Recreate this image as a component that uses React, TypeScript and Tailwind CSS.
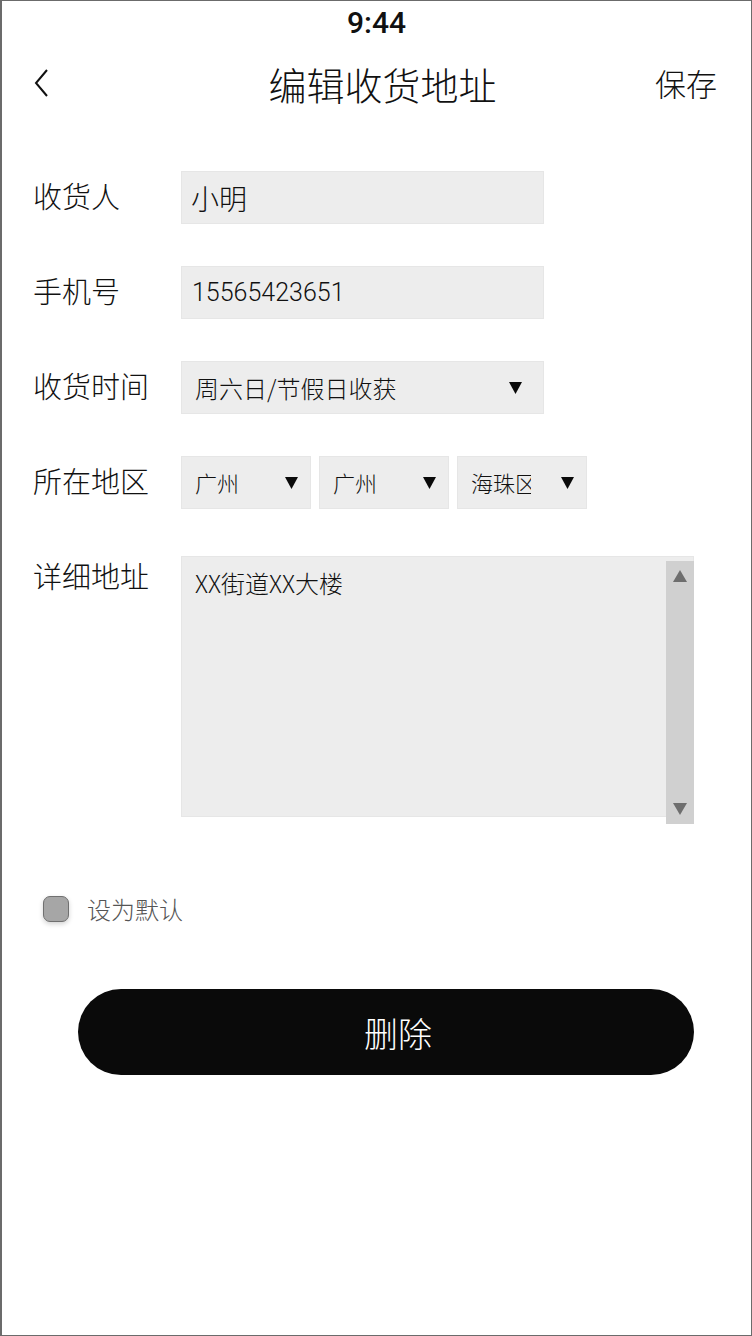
import React from "react";

const cjk = { fontFamily: '"Noto Sans CJK SC", "Noto Sans", sans-serif' };
const digits = { fontFamily: 'Roboto, "Liberation Sans", sans-serif' };

function Caret({ className = "" }: { className?: string }) {
  return (
    <svg width="13" height="12" viewBox="0 0 13 12" className={className}>
      <path d="M0 0 H13 L6.5 12 Z" fill="#0a0a0a" />
    </svg>
  );
}

function Label({ children }: { children: React.ReactNode }) {
  return (
    <div className="w-[148px] shrink-0 pb-[4px] text-[29px] font-light text-[#111] leading-none" style={cjk}>
      {children}
    </div>
  );
}

function RegionSelect({ text }: { text: string }) {
  return (
    <div className="flex h-[53px] w-[130px] items-center justify-between bg-[#ededed] border border-[#e6e6e6] pl-[13px] pr-[12px]">
      <span className="w-[60px] overflow-hidden whitespace-nowrap text-[22px] font-light text-[#111]" style={cjk}>
        {text}
      </span>
      <Caret />
    </div>
  );
}

export default function App() {
  return (
    <div className="relative h-[1336px] w-[752px] overflow-hidden border border-[#6b6b6b] border-l-2 bg-white">
      {/* status bar */}
      <div className="flex h-[40px] items-center justify-center pt-[2px] text-[30px] font-medium text-[#111]" style={digits}>
        9:44
      </div>

      {/* navigation bar */}
      <div className="relative flex h-[88px] items-center justify-between px-[30px] pb-[4px]">
        <svg width="18" height="30" viewBox="0 0 18 30" className="ml-[1px]">
          <path d="M14 2 L3 15 L14 28" fill="none" stroke="#111" strokeWidth="2" />
        </svg>
        <div className="absolute inset-x-0 top-0 flex h-[84px] items-center justify-center pl-[12px] text-[38px] font-light text-[#111]" style={cjk}>
          编辑收货地址
        </div>
        <div className="mr-[4px] text-[31px] font-light text-[#111]" style={cjk}>
          保存
        </div>
      </div>

      {/* form */}
      <div className="mt-[42px] flex flex-col gap-[42px] pl-[31px]">
        <div className="flex items-center">
          <Label>收货人</Label>
          <div className="flex h-[53px] w-[363px] items-center bg-[#ededed] border border-[#e6e6e6] pl-[9px] text-[28px] font-light text-[#111]" style={cjk}>
            小明
          </div>
        </div>

        <div className="flex items-center">
          <Label>手机号</Label>
          <div className="flex h-[53px] w-[363px] items-center bg-[#ededed] border border-[#e6e6e6] pl-[10px] pt-[1px] text-[25px] font-light text-[#111]" style={digits}>
            15565423651
          </div>
        </div>

        <div className="flex items-center">
          <Label>收货时间</Label>
          <div className="flex h-[53px] w-[363px] items-center justify-between bg-[#ededed] border border-[#e6e6e6] pl-[13px] pr-[21px]">
            <span className="text-[24px] font-light text-[#111]" style={cjk}>
              周六日/节假日收获
            </span>
            <Caret />
          </div>
        </div>

        <div className="flex items-center">
          <Label>所在地区</Label>
          <div className="flex gap-[8px]">
            <RegionSelect text="广州" />
            <RegionSelect text="广州" />
            <RegionSelect text="海珠区" />
          </div>
        </div>

        <div className="mt-[5px] flex items-start">
          <div className="pt-[5px]">
            <Label>详细地址</Label>
          </div>
          <div className="relative h-[261px] w-[513px] bg-[#ededed] border border-[#e6e6e6] pl-[13px] pt-[8px]">
            <span className="text-[24px] font-light text-[#111]" style={cjk}>
              XX街道XX大楼
            </span>
            <div className="absolute right-[-1px] top-[4px] flex h-[263px] w-[28px] flex-col items-center justify-between bg-[#d0d0d0] py-[9px]">
              <svg width="14" height="12" viewBox="0 0 14 12">
                <path d="M7 0 L14 12 H0 Z" fill="#6e6e6e" />
              </svg>
              <svg width="14" height="12" viewBox="0 0 14 12">
                <path d="M0 0 H14 L7 12 Z" fill="#6e6e6e" />
              </svg>
            </div>
          </div>
        </div>
      </div>

      {/* default toggle */}
      <div className="ml-[41px] mt-[74px] flex items-center gap-[18px]">
        <div className="h-[26px] w-[26px] rounded-[7px] border border-[#707070] bg-[#a6a6a6] shadow-[0_2px_5px_rgba(0,0,0,0.18)]" />
        <span className="text-[24px] font-light text-[#555]" style={cjk}>
          设为默认
        </span>
      </div>

      {/* delete button */}
      <div className="mt-[62px] flex justify-center pl-[19px]">
        <button className="flex h-[86px] w-[616px] items-center justify-center rounded-full bg-[#0a0a0a] pl-[24px] text-[34px] font-light text-white" style={cjk}>
          删除
        </button>
      </div>
    </div>
  );
}
